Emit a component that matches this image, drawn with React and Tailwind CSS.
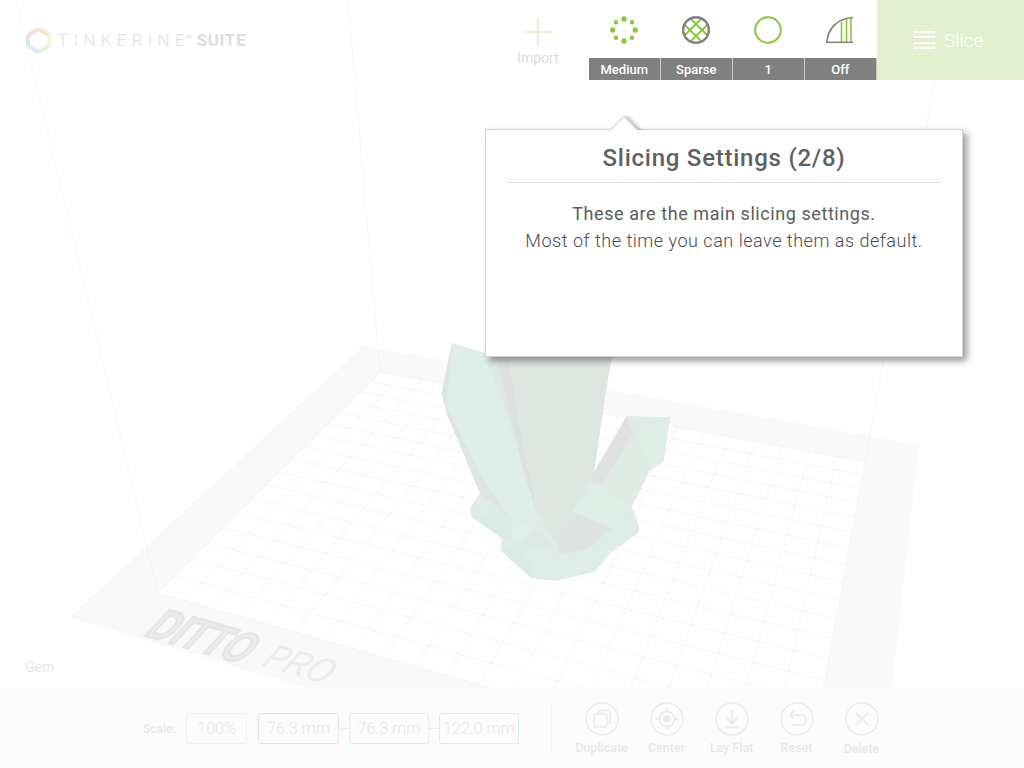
import React from "react";

function project(u, v) {
  const [x0, y0, x1, y1, x2, y2, x3, y3] = [380, 372, 865, 462, 807, 778, 158, 593];
  const dx1 = x1 - x2, dx2 = x3 - x2, sx = x0 - x1 + x2 - x3;
  const dy1 = y1 - y2, dy2 = y3 - y2, sy = y0 - y1 + y2 - y3;
  const den = dx1 * dy2 - dx2 * dy1;
  const g = (sx * dy2 - dx2 * sy) / den;
  const h = (dx1 * sy - sx * dy1) / den;
  const a = x1 - x0 + g * x1, b = x3 - x0 + h * x3, c = x0;
  const d = y1 - y0 + g * y1, e = y3 - y0 + h * y3, f = y0;
  const w = g * u + h * v + 1;
  return [(a * u + b * v + c) / w, (d * u + e * v + f) / w];
}

function Line3({ a, b }) {
  return <line x1={a[0]} y1={a[1]} x2={b[0]} y2={b[1]} stroke="#f5f5f5" strokeWidth="1" />;
}

const pts = (s) =>
  s
    .trim()
    .split(/\s+/)
    .map((p) => {
      const [x, y] = p.split(",").map(Number);
      return `${430 + x / 3},${330 + y / 3}`;
    })
    .join(" ");

function Scene() {
  const cols = Array.from({ length: 21 }, (_, i) => i / 20);
  const rows = Array.from({ length: 18 }, (_, i) => i / 17);
  return (
    <svg className="absolute inset-0" width="1024" height="768" viewBox="0 0 1024 768">
      <polygon points="363,346 919,445 880,800 306,800 306,688 70,617" fill="#f9f9f9" />
      <polygon points="380,372 865,462 807,778 158,593" fill="#ffffff" />
      {cols.map((u) => (
        <Line3 key={`c${u}`} a={project(u, 0)} b={project(u, 1)} />
      ))}
      {rows.map((v) => (
        <Line3 key={`r${v}`} a={project(0, v)} b={project(1, v)} />
      ))}
      <line x1="16" y1="0" x2="158" y2="593" stroke="#f3f3f3" />
      <line x1="348" y1="0" x2="380" y2="372" stroke="#f3f3f3" />
      <line x1="935" y1="80" x2="865" y2="462" stroke="#f3f3f3" />

      <text
        transform="matrix(1.1,0.32,-1.16,1.25,143,635)"
        fontFamily="Liberation Sans, sans-serif"
        fontWeight="700"
        fontSize="30"
        fill="#ececec"
        stroke="#e6e6e6"
        strokeWidth="1.6"
      >
        DITTO
      </text>
      <text
        transform="matrix(1,0.29,-0.9,1,259,665)"
        fontFamily="Liberation Sans, sans-serif"
        fontSize="30"
        fill="#ececec"
      >
        PRO
      </text>

      {/* gem */}
      <polygon
        points={pts("66,38 200,80 545,80 525,200 490,440 590,258 720,262 700,395 660,420 605,530 628,590 625,610 540,670 495,725 380,752 305,745 210,660 215,625 125,560 120,535 150,490 50,250 35,190")}
        fill="#deede7"
      />
      <polygon points={pts("120,535 125,560 215,625 245,625 240,590")} fill="#dcebe5" />
      <polygon points={pts("210,660 305,745 305,715 260,640")} fill="#dbeae4" />
      <polygon points={pts("66,38 35,190 50,250 150,490 245,570 155,440 50,230")} fill="#dfe5e2" />
      <polygon points={pts("66,38 205,95 240,230 320,545 245,570 155,440 50,230")} fill="#dfeee8" />
      <polygon points={pts("170,90 205,85 240,230 320,545 270,380 220,220")} fill="#dde9e4" />
      <polygon points={pts("200,80 545,80 525,200 490,440 430,540 380,650 395,670 320,545 240,230")} fill="#dee6e2" />
      <polygon points={pts("200,80 235,80 270,300 320,545 280,420 235,230")} fill="#dce1df" />
      <polygon points={pts("610,310 720,262 700,395 660,420 605,530 545,595 490,570 505,465")} fill="#dfece6" />
      <polygon points={pts("610,310 720,262 700,395 660,420 625,330")} fill="#dfeee7" />
      <polygon points={pts("590,258 610,310 520,460 487,465 490,430")} fill="#dfe2e1" />
      <polygon points={pts("505,465 430,545 545,595 605,530")} fill="#e0eee8" />
      <polygon points={pts("430,545 545,595 470,660 395,672 380,650")} fill="#dfe4e2" />
      <polygon points={pts("245,590 300,585 300,610 265,640 248,625")} fill="#e1efe9" />
      <polygon points={pts("265,640 330,600 395,670 310,650")} fill="#dde9e4" />
    </svg>
  );
}

function Logo() {
  return (
    <div className="flex items-center ml-[26px] mt-[27px] h-[26px]">
      <svg width="25" height="27" viewBox="0 0 25 27" className="mr-[7px]">
        <g fill="none" strokeWidth="4">
          <path d="M2,8 L12.5,2.2" stroke="#fbdcdc" />
          <path d="M12.5,2.2 L23,8" stroke="#fbe3d2" />
          <path d="M23,8 L23,19" stroke="#fbf5d4" />
          <path d="M23,19 L12.5,25" stroke="#e7f2d2" />
          <path d="M12.5,25 L2,19" stroke="#d9ebf5" />
          <path d="M2,19 L2,8" stroke="#e5dfee" />
        </g>
      </svg>
      <span className="text-[17px] font-light tracking-[5.3px] text-[#dedede] leading-none">
        TINKERIN<span className="tracking-normal">E</span>
      </span>
      <span className="text-[4px] font-bold text-[#e4e4e4] self-start mt-[8px] ml-[1px] mr-[5px] leading-none">TM</span>
      <span className="text-[17px] font-bold tracking-[0.6px] text-[#dedede] leading-none">SUITE</span>
    </div>
  );
}

const G = "#8cc63f";
const S = "#808080";

function IconDots() {
  return (
    <svg width="30" height="30" viewBox="-15 -15 30 30">
      <g fill={G}>
        <circle cx="0" cy="-11" r="2.7" />
        <circle cx="0" cy="11" r="2.7" />
        <circle cx="-11.3" cy="0" r="2.7" />
        <circle cx="11.3" cy="0" r="2.7" />
        <rect x="-10" y="-9.7" width="4" height="4" />
        <rect x="6" y="-9.7" width="4" height="4" />
        <rect x="-10" y="5.7" width="4" height="4" />
        <rect x="6" y="5.7" width="4" height="4" />
      </g>
    </svg>
  );
}
function IconHatch() {
  return (
    <svg width="30" height="30" viewBox="-15 -15 30 30">
      <g stroke={G} strokeWidth="2" fill="none">
        <path d="M-11.5,-5.5 L5.5,11.5 M-5.5,-11.5 L11.5,5.5" />
        <path d="M11.5,-5.5 L-5.5,11.5 M5.5,-11.5 L-11.5,5.5" />
      </g>
      <circle r="12.8" fill="none" stroke={S} strokeWidth="2.4" />
    </svg>
  );
}
function IconCircle() {
  return (
    <svg width="30" height="30" viewBox="-15 -15 30 30">
      <circle r="12.8" fill="none" stroke={G} strokeWidth="2" />
    </svg>
  );
}
function IconShell() {
  return (
    <svg width="30" height="30" viewBox="0 0 30 30">
      <path d="M16.5,7 V27 M21.5,3.5 V27 M26,3 V27" stroke={G} strokeWidth="1.6" />
      <path d="M2,27.5 C2,14 13,3 28,2.5" fill="none" stroke={S} strokeWidth="1.7" />
      <path d="M1,27.3 L28,27.3" stroke={S} strokeWidth="1.5" />
    </svg>
  );
}

function Setting({ icon, label }) {
  return (
    <div className="w-[70.5px] h-20 flex flex-col items-center">
      <div className="h-[58px] flex items-start pt-[15px]">{icon}</div>
      <div className="w-full h-[22px] bg-[#808080] shadow-[1px_0_0_#c8c8c8] text-white text-[13px] font-medium flex items-center justify-center leading-none">
        {label}
      </div>
    </div>
  );
}

function Header() {
  return (
    <div className="relative flex justify-between h-20">
      <Logo />
      <div className="flex">
        <div className="w-[52px] mr-[25px] flex flex-col items-center">
          <svg width="28" height="28" viewBox="0 0 28 28" className="mt-[18px]">
            <path d="M14,0 V28 M0,14 H28" stroke="#e4f1d4" strokeWidth="2" />
          </svg>
          <span className="text-[14px] text-[#dcdcdc] leading-none mt-[5px]">Import</span>
        </div>
        <div className="flex gap-[1.5px]">
          <Setting icon={<IconDots />} label="Medium" />
          <Setting icon={<IconHatch />} label="Sparse" />
          <Setting icon={<IconCircle />} label="1" />
          <Setting icon={<IconShell />} label="Off" />
        </div>
        <div className="w-[147px] ml-[1.5px] h-20 bg-[#e2f0d0] flex items-center pl-[37px] gap-[9px]">
          <div className="flex flex-col gap-[3.5px]">
            <div className="w-[21px] h-[2px] bg-white" />
            <div className="w-[21px] h-[2px] bg-white" />
            <div className="w-[21px] h-[2px] bg-white" />
            <div className="w-[21px] h-[2px] bg-white" />
          </div>
          <span className="text-[19px] font-light text-white leading-none pt-[1px]">Slice</span>
        </div>
      </div>
    </div>
  );
}

const strokeC = "#ececec";

function ActionIcon({ children }) {
  return (
    <svg width="34" height="34" viewBox="0 0 34 34" fill="none" stroke={strokeC} strokeWidth="1.6">
      <circle cx="17" cy="17" r="16" />
      {children}
    </svg>
  );
}

function Action({ label, children, extra }) {
  return (
    <div className="w-[65px] flex flex-col items-center">
      <ActionIcon>{children}</ActionIcon>
      <span className={`text-[12.5px] text-[#e8e8e8] font-medium leading-none ${extra || "mt-[6px]"}`}>{label}</span>
    </div>
  );
}

function Box({ cls, w, children }) {
  return (
    <div className={`${w} h-[31px] border rounded-[3px] ${cls} flex items-center justify-center text-[16px] font-light text-[#e6e6e6] leading-none`}>
      {children}
    </div>
  );
}

function Footer() {
  return (
    <div className="absolute left-0 right-0 bottom-0 h-20 bg-[#fcfcfc] flex items-start">
      <div className="flex items-center ml-[143px] mt-[25px]">
        <span className="text-[12px] text-[#e8e8e8] font-medium w-[43px]">Scale:</span>
        <Box w="w-[61px]" cls="border-[#eef1f1]">100%</Box>
        <Box w="w-[81px] ml-[11px]" cls="border-[#f8dcdc]">76.3 mm</Box>
        <div className="w-[10px] h-px bg-[#ececec]" />
        <Box w="w-[80px]" cls="border-[#e2f0e6]">76.3 mm</Box>
        <div className="w-[10px] h-px bg-[#ececec]" />
        <Box w="w-[80px]" cls="border-[#dcebf5]">122.0 mm</Box>
      </div>
      <div className="w-px h-[52px] bg-[#f3f3f3] mt-[15px] ml-[32px]" />
      <div className="flex ml-[17px] mt-[14px]">
        <Action label="Duplicate">
          <rect x="9" y="12" width="13" height="13" rx="2.5" />
          <path d="M13,12 V10.5 A2,2 0 0 1 15,8.5 H23 A2,2 0 0 1 25,10.5 V19 A2,2 0 0 1 23,21 H22" />
        </Action>
        <Action label="Center">
          <circle cx="17" cy="17" r="7.5" strokeWidth="1.8" />
          <circle cx="17" cy="17" r="3" fill={strokeC} />
          <path d="M17,6 V10 M17,24 V28 M6,17 H10 M24,17 H28" strokeWidth="1.8" />
        </Action>
        <Action label="Lay Flat">
          <path d="M17,8 V21 M11,15.5 L17,21.5 L23,15.5 M10,25.5 H24" strokeWidth="1.8" />
        </Action>
        <Action label="Reset">
          <path d="M10,13 H21 A5,5 0 0 1 21,23 H12 M14,9 L10,13 L14,17" strokeWidth="1.8" />
        </Action>
        <Action label="Delete" extra="mt-[7px]">
          <path d="M11,11 L23,23 M23,11 L11,23" strokeWidth="2" />
        </Action>
      </div>
    </div>
  );
}

function Dialog() {
  return (
    <div className="absolute left-[485px] top-[129px] w-[478px] h-[228px] bg-white border border-[#d2d2d2] shadow-[4px_4px_7px_rgba(0,0,0,0.4)] text-center">
      <div className="absolute left-[110px] top-[-15px] w-[58px] h-[15px] overflow-hidden">
        <div className="absolute left-[18px] top-[5px] w-5 h-5 rotate-45 bg-white border-l border-t border-[#d2d2d2] shadow-[2px_-2px_4px_rgba(0,0,0,0.3)]" />
      </div>
      <div className="mx-[21px] h-[53px] border-b border-[#dcdcdc] flex items-center justify-center pt-[3px]">
        <h1 className="text-[24px] font-medium text-[#606060] tracking-[0.75px] leading-none">Slicing Settings (2/8)</h1>
      </div>
      <p className="mt-[17px] text-[18px] font-light text-[#4a4a4a] leading-[27px] tracking-[0.52px]">
        <span className="font-normal text-[#5c5c5c] tracking-[0.57px]">These are the main slicing settings.</span>
        <br />
        Most of the time you can leave them as default.
      </p>
    </div>
  );
}

export default function App() {
  return (
    <div className="relative w-[1024px] h-[768px] overflow-hidden bg-white font-[Roboto,sans-serif]">
      <Scene />
      <Header />
      <span className="absolute left-[25px] top-[660px] text-[14px] text-[#e6e6e6] leading-none">Gem</span>
      <Footer />
      <Dialog />
    </div>
  );
}
